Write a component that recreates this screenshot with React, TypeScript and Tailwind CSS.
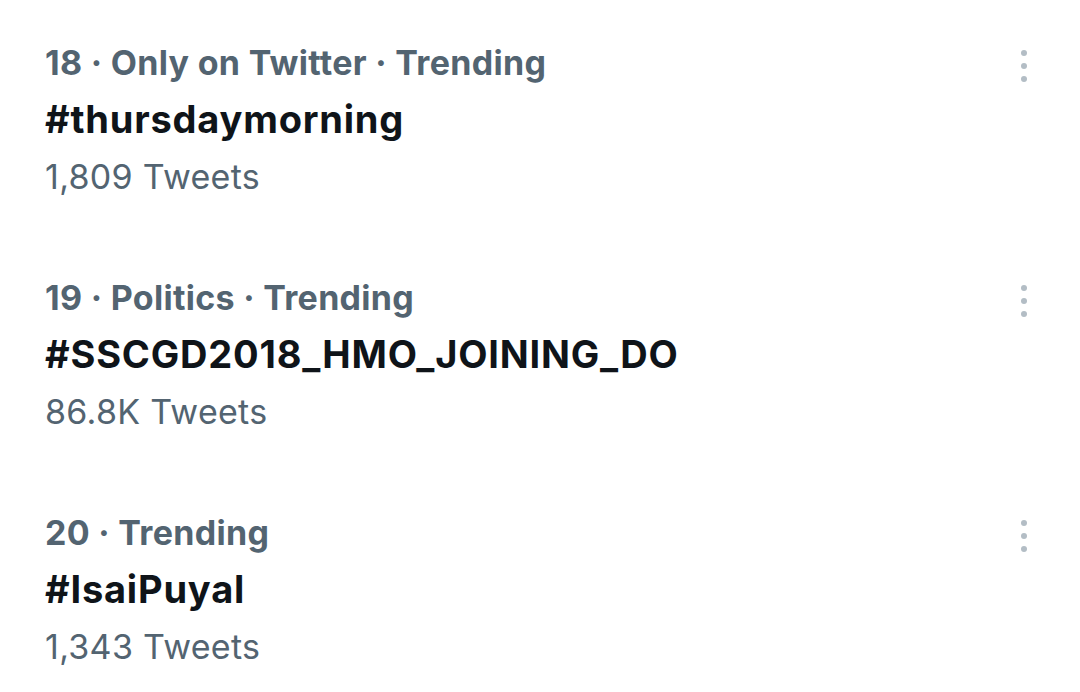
import React from "react";

const items = [
  { meta: "18 · Only on Twitter · Trending", tag: "#thursdaymorning", count: "1,809 Tweets" },
  { meta: "19 · Politics · Trending", tag: "#SSCGD2018_HMO_JOINING_DO", count: "86.8K Tweets" },
  { meta: "20 · Trending", tag: "#IsaiPuyal", count: "1,343 Tweets" },
];

function Dots() {
  return (
    <svg width="10" height="36" viewBox="0 0 10 36" className="text-[#b3bdc5]">
      <circle cx="5" cy="5" r="3" fill="currentColor" />
      <circle cx="5" cy="18" r="3" fill="currentColor" />
      <circle cx="5" cy="31" r="3" fill="currentColor" />
    </svg>
  );
}

export default function App() {
  return (
    <div
      className="w-[1080px] h-[692px] bg-white overflow-hidden pt-[34px] pl-[45px] pr-[51px]"
      style={{ fontFamily: 'Inter, "Liberation Sans", Arial, sans-serif' }}
    >
      <div className="flex flex-col gap-[64px]">
        {items.map((it) => (
          <div key={it.tag} className="flex justify-between">
            <div className="flex flex-col leading-[57px]">
              <div className="text-[34px] font-bold tracking-[0.3px] text-[#536471]">{it.meta}</div>
              <div className="text-[38px] font-bold tracking-[0.8px] text-[#0f1419]">{it.tag}</div>
              <div className="text-[34px] tracking-[0.3px] text-[#536471]">{it.count}</div>
            </div>
            <div className="pt-[14px]">
              <Dots />
            </div>
          </div>
        ))}
      </div>
    </div>
  );
}
